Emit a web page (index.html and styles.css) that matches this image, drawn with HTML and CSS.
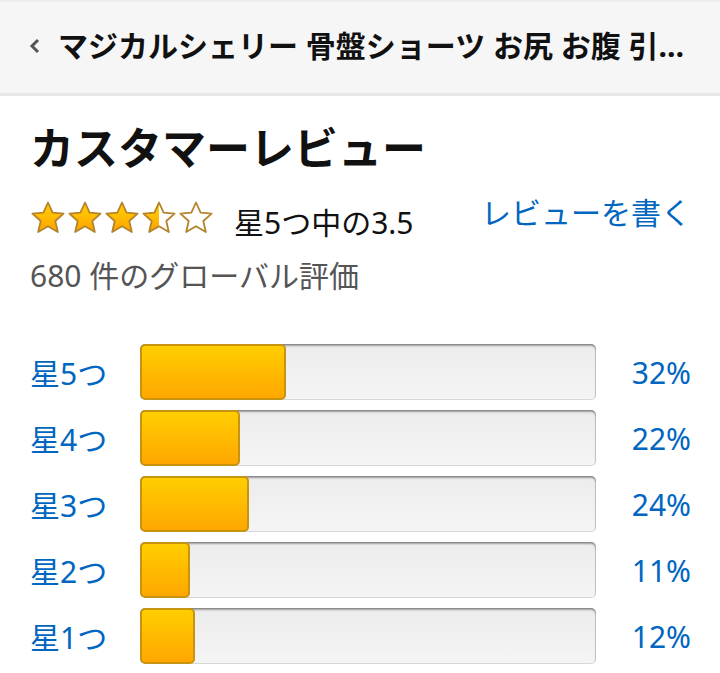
FILE: index.html
```html
<!DOCTYPE html>
<html lang="ja">
<head>
  <meta charset="UTF-8">
  <meta name="viewport" content="width=device-width, initial-scale=1.0">
  <title>カスタマーレビュー</title>
  <link rel="stylesheet" href="styles.css">
</head>
<body>

  <!-- Top bar with back link -->
  <header class="top-bar">
    <a href="#" class="back">
      <svg width="14" height="18" viewBox="0 0 14 18"><path d="M10 3 L4 9 L10 15" fill="none" stroke="#555" stroke-width="3"/></svg>
    </a>
    <span class="product-name">マジカルシェリー 骨盤ショーツ お尻 お腹 引き締め 補正下着 レディース</span>
  </header>

  <main class="reviews">
    <h1 class="title">カスタマーレビュー</h1>

    <div class="rating-row">
      <div class="rating">
        <svg class="stars" width="186" height="36" viewBox="0 0 186 36">
          <defs>
            <linearGradient id="gold" x1="0" y1="0" x2="0" y2="1">
              <stop offset="0" stop-color="#ffd200"/>
              <stop offset="1" stop-color="#ffa400"/>
            </linearGradient>
            <path id="star" d="M18 2.5 L22.6 12.6 L33.6 13.6 L25.3 21 L27.8 32 L18 26.3 L8.2 32 L10.7 21 L2.4 13.6 L13.4 12.6 Z"/>
            <clipPath id="half"><rect x="0" y="0" width="18" height="36"/></clipPath>
          </defs>
          <use href="#star" x="0" fill="url(#gold)" stroke="#b5832b" stroke-width="1.8" stroke-linejoin="round"/>
          <use href="#star" x="37" fill="url(#gold)" stroke="#b5832b" stroke-width="1.8" stroke-linejoin="round"/>
          <use href="#star" x="74" fill="url(#gold)" stroke="#b5832b" stroke-width="1.8" stroke-linejoin="round"/>
          <g transform="translate(111 0)">
            <use href="#star" fill="#fff"/>
            <use href="#star" fill="url(#gold)" clip-path="url(#half)"/>
            <use href="#star" fill="none" stroke="#b5832b" stroke-width="1.8" stroke-linejoin="round"/>
          </g>
          <use href="#star" x="148" fill="#fff" stroke="#b5832b" stroke-width="1.8" stroke-linejoin="round"/>
        </svg>
        <span class="rating-text">星5つ中の3.5</span>
      </div>
      <a href="#" class="write-review">レビューを書く</a>
    </div>

    <p class="total">680 件のグローバル評価</p>

    <div class="histogram">
      <a href="#" class="hist-row">
        <span class="hist-label">星5つ</span>
        <span class="meter"><span class="meter-fill" style="width: 32%"></span></span>
        <span class="hist-pct">32%</span>
      </a>
      <a href="#" class="hist-row">
        <span class="hist-label">星4つ</span>
        <span class="meter"><span class="meter-fill" style="width: 22%"></span></span>
        <span class="hist-pct">22%</span>
      </a>
      <a href="#" class="hist-row">
        <span class="hist-label">星3つ</span>
        <span class="meter"><span class="meter-fill" style="width: 24%"></span></span>
        <span class="hist-pct">24%</span>
      </a>
      <a href="#" class="hist-row">
        <span class="hist-label">星2つ</span>
        <span class="meter"><span class="meter-fill" style="width: 11%"></span></span>
        <span class="hist-pct">11%</span>
      </a>
      <a href="#" class="hist-row">
        <span class="hist-label">星1つ</span>
        <span class="meter"><span class="meter-fill" style="width: 12%"></span></span>
        <span class="hist-pct">12%</span>
      </a>
    </div>
  </main>
</body>
</html>
```

FILE: styles.css
```css
body {
  margin: 0;
  font-family: "Noto Sans", "Noto Sans CJK JP", sans-serif;
  background: #fff;
  color: #111;
}

.top-bar {
  display: flex;
  align-items: center;
  box-sizing: border-box;
  height: 96px;
  padding: 0 30px 4px 28px;
  background: #f6f6f6;
  border-top: 2px solid #eeeeee;
  border-bottom: 3px solid #e7e7e7;
}

.back {
  display: flex;
  margin-right: 16px;
}

.product-name {
  flex: 1;
  min-width: 0;
  font-size: 30px;
  line-height: 40px;
  font-weight: bold;
  color: #111;
  white-space: nowrap;
  overflow: hidden;
  text-overflow: ellipsis;
}

.reviews {
  padding: 0 29px 0 30px;
}

.title {
  margin: 24px 0 0;
  font-size: 44px;
  line-height: 56px;
  font-weight: bold;
}

.rating-row {
  display: flex;
  justify-content: space-between;
  align-items: flex-start;
  margin-top: 17px;
}

.rating {
  display: flex;
  align-items: center;
}

.stars {
  display: block;
  margin-right: 18px;
}

.rating-text {
  font-size: 30px;
  line-height: 40px;
  margin-top: 10px;
}

.write-review {
  font-size: 30px;
  line-height: 40px;
  color: #0066c0;
  text-decoration: none;
}

.total {
  margin: 13px 0 0;
  font-size: 30px;
  line-height: 40px;
  color: #555;
}

.histogram {
  display: flex;
  flex-direction: column;
  gap: 10px;
  margin-top: 48px;
}

.hist-row {
  display: flex;
  align-items: center;
  height: 56px;
  text-decoration: none;
  color: #0066c0;
  font-size: 30px;
}

.hist-label {
  width: 110px;
}

.meter {
  flex: 1;
  height: 56px;
  border-radius: 5px;
  background: linear-gradient(to bottom, #ececec, #f5f5f5);
  box-shadow: inset 0 2px 2px rgba(0, 0, 0, 0.35), inset 0 0 0 1px rgba(0, 0, 0, 0.12);
  overflow: hidden;
}

.meter-fill {
  display: block;
  box-sizing: border-box;
  height: 100%;
  border: 2px solid #c8930f;
  border-radius: 5px;
  background: linear-gradient(to bottom, #ffce00, #ffa700);
}

.hist-pct {
  width: 95px;
  text-align: right;
}
```
